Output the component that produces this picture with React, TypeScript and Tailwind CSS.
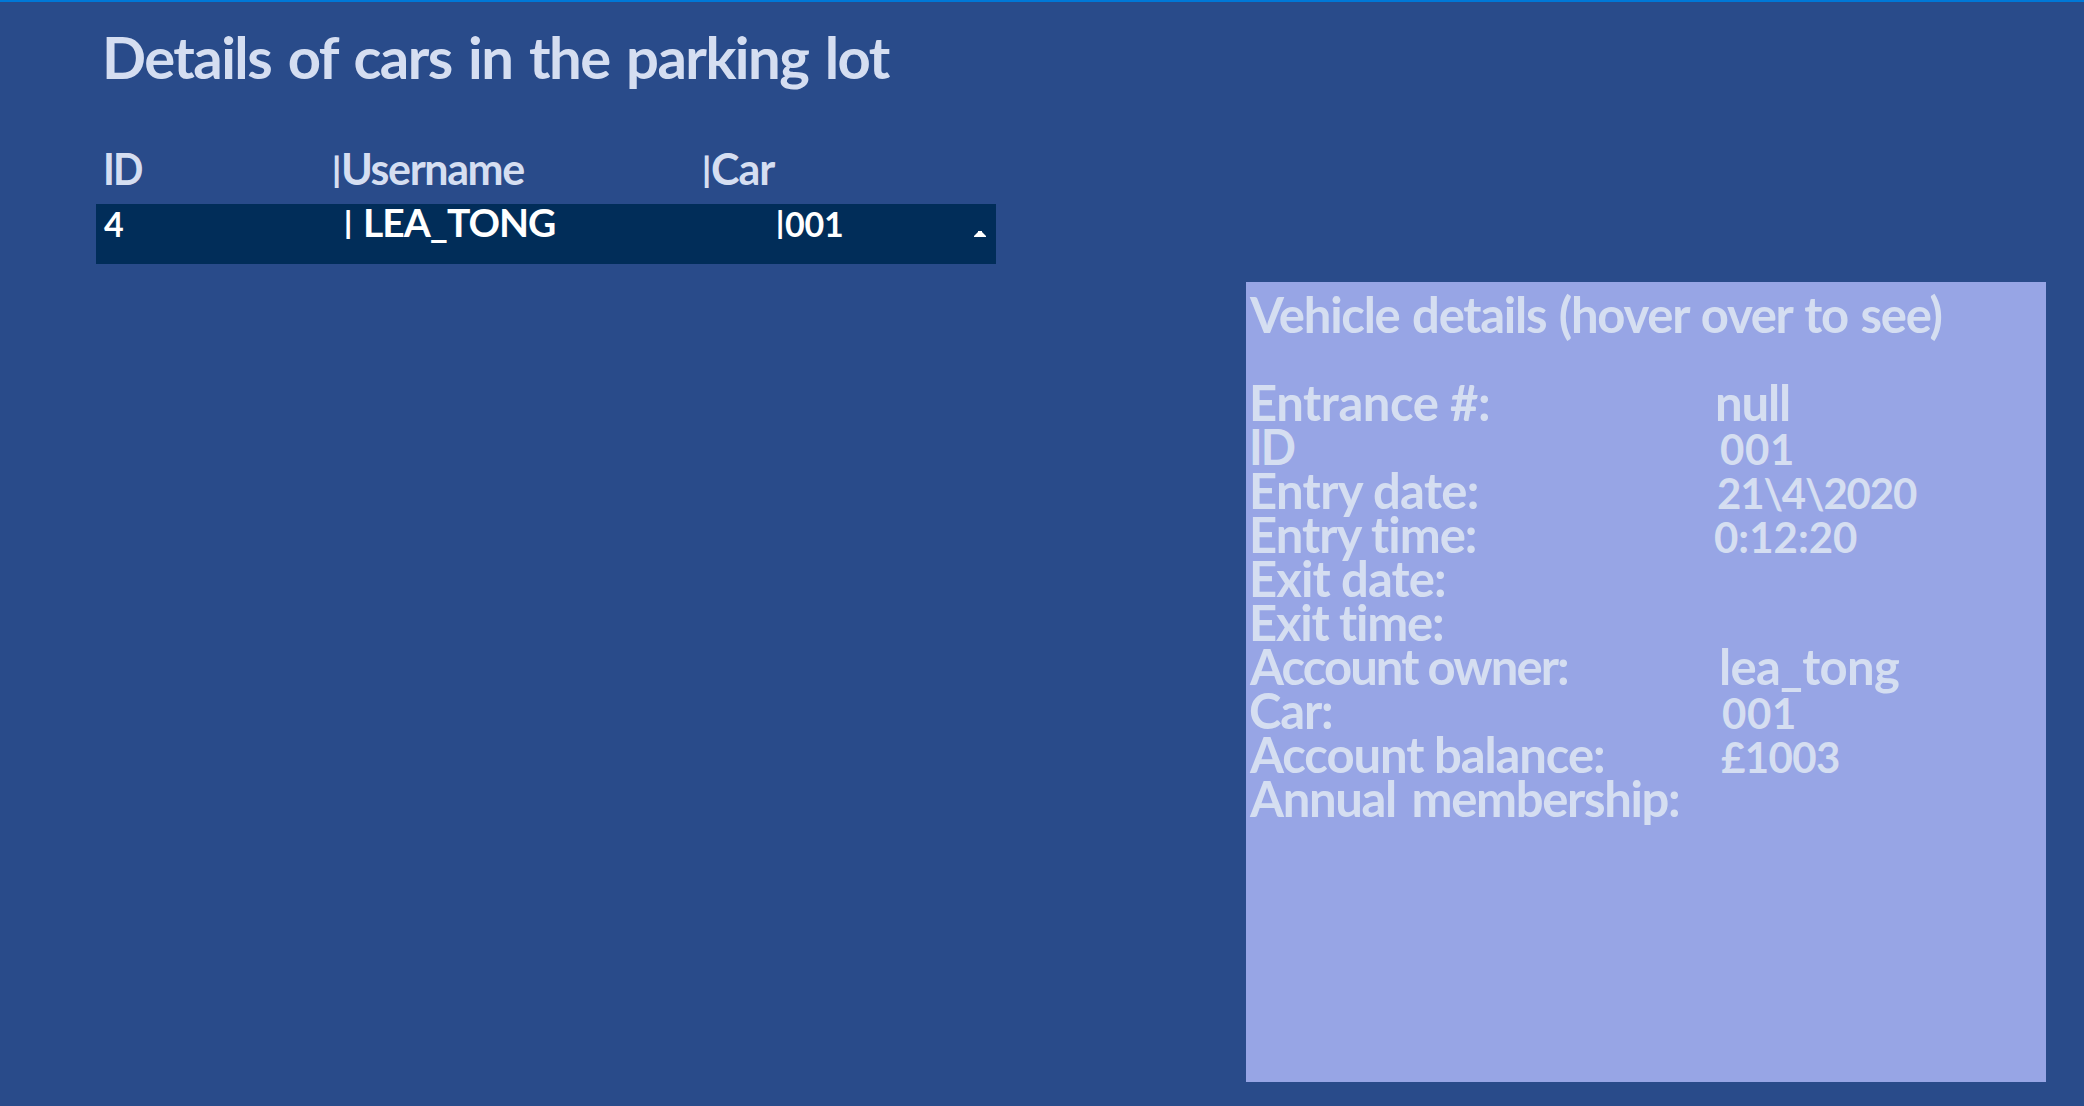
const details = [
  { label: "Entrance #:", l: "tracking-[-0.43px] ml-[-1px]", value: "null", v: "ml-[-1px] tracking-[-1.15px]" },
  { label: "ID", l: "inline-block origin-left scale-x-[0.945] tracking-[-2px] ml-[-1px]", value: "001", v: "ml-[4px] text-[42px] tracking-[0.64px]" },
  { label: "Entry date:", l: "tracking-[-0.67px] ml-[-1px]", value: "21\\4\\2020", v: "ml-[1px] text-[42px] tracking-[-1.16px]" },
  { label: "Entry time:", l: "tracking-[-1px] ml-[-1px]", value: "0:12:20", v: "ml-[-2px] text-[42px]" },
  { label: "Exit date:", l: "tracking-[-0.87px] ml-[-1px]", value: "", v: "" },
  { label: "Exit time:", l: "tracking-[-1.25px] ml-[-1px]", value: "", v: "" },
  { label: "Account owner:", l: "tracking-[-1.93px]", value: "lea_tong", v: "ml-[3px] tracking-[-0.7px]" },
  { label: "Car:", l: "tracking-[-1.19px] ml-[-1px]", value: "001", v: "ml-[6px] text-[42px] tracking-[0.64px]" },
  { label: "Account balance:", l: "tracking-[-1.11px]", value: "£1003", v: "ml-[5px] text-[42px] tracking-[-0.61px]" },
  { label: "Annual membership:", l: "tracking-[-1.33px] [word-spacing:5px]", value: "", v: "" },
];

export default function App() {
  return (
    <div className="flex h-[1106px] w-[2084px] flex-col overflow-hidden whitespace-pre border-t-2 border-[#0078d7] bg-[#294b8a] font-['Lato',sans-serif] font-bold text-[#d5def1]">
      <h1 className="mt-[20px] pl-[102px] text-[58px] leading-[70px] tracking-[-1.56px] [word-spacing:4px]">
        Details of cars in the parking lot
      </h1>

      <main className="mt-[51px] flex">
        <section className="ml-24 w-[900px]">
          <div className="flex h-[52px] text-[43px] leading-[52px]">
            <span className="w-[236px] pl-[7px]">
              <span className="inline-block origin-left scale-x-[0.93] tracking-[-2px]">ID</span>
            </span>
            <span className="relative -top-px w-[9px] text-[35px] font-black">|</span>
            <span className="w-[361px] tracking-[-1.4px]">Username</span>
            <span className="relative -top-px w-[9px] text-[35px] font-black">|</span>
            <span className="tracking-[-1px]">Car</span>
          </div>
          <div className="mt-[9px] flex h-[60px] items-baseline bg-[#012d59] text-[39px] leading-[36px] text-white">
            <span className="w-[248px] pl-[8px] text-[34px]">4</span>
            <span className="relative -top-[3px] w-[19px] text-[31px] font-black">|</span>
            <span className="w-[413px] tracking-[-1px]">LEA_TONG</span>
            <span className="relative -top-[3px] w-[9px] text-[31px] font-black">|</span>
            <span className="w-[189px] text-[34px] tracking-[-0.22px]">001</span>
            <svg viewBox="0 0 12 6" className="h-[6px] w-[12px]" fill="currentColor">
              <path d="M4 0h4v1l4 4v1H0V5l4-4z" />
            </svg>
          </div>
        </section>

        <section className="ml-[250px] mt-[139px] h-[800px] w-[800px] bg-[#97a5e5] pt-[10px] text-[49px] leading-[44px]">
          <h2 className="h-[88px] pl-[4px] tracking-[-1.27px] [word-spacing:2px]">Vehicle details (hover over to see)</h2>
          {details.map((d) => (
            <div key={d.label} className="flex h-11 items-baseline pl-1">
              <span className="w-[466px] shrink-0">
                <span className={d.l}>{d.label}</span>
              </span>
              <span className={d.v}>{d.value}</span>
            </div>
          ))}
        </section>
      </main>
    </div>
  );
}
